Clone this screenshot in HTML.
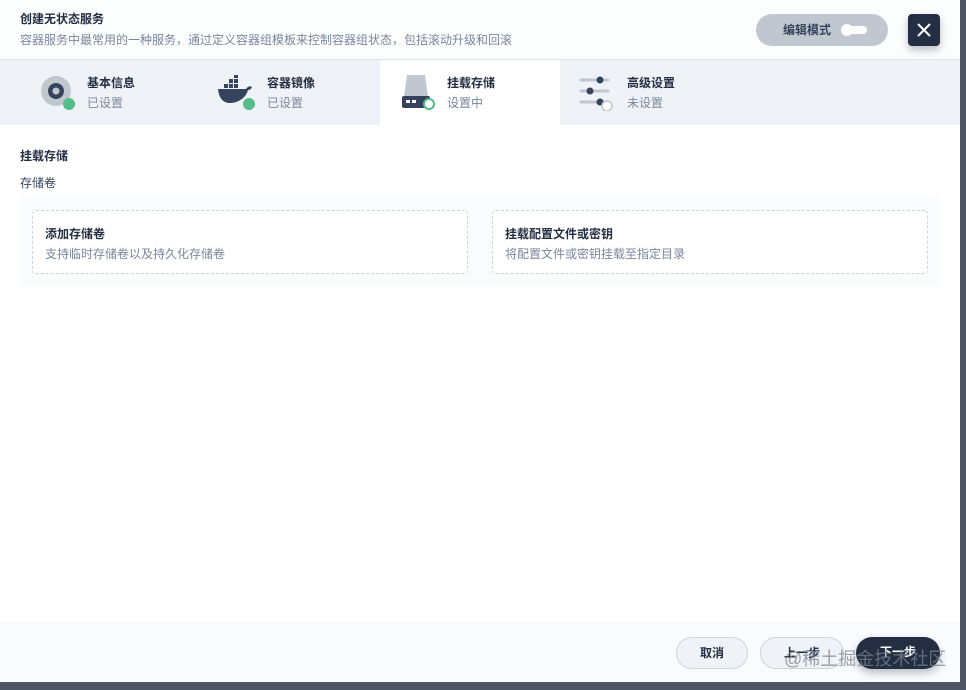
<!DOCTYPE html>
<html><head><meta charset="utf-8"><style>
*{margin:0;padding:0;box-sizing:border-box}
body{width:966px;height:690px;background:#4d5564;font-family:"Liberation Sans","Noto Sans CJK SC",sans-serif;position:relative;overflow:hidden}
.modal{position:absolute;left:0;top:0;width:960px;height:682px;background:#fff}
.hdr{height:60px;background:#fcfdfd;border-bottom:1px solid #dfe3e8;position:relative}
.t1{position:absolute;left:20px;top:10px;font-size:12px;font-weight:bold;color:#242e42}
.t2{position:absolute;left:20px;top:31px;font-size:12px;color:#79879c}
.edit{position:absolute;left:756px;top:14px;width:132px;height:32px;border-radius:16px;background:#c1c7cf;font-size:12px;color:#36435c;font-weight:bold}
.edit span{position:absolute;left:27px;top:7px}
.tog{position:absolute;left:87px;top:12px;width:24px;height:8px;border-radius:4px;background:#fff}
.tog:before{content:"";position:absolute;left:-2px;top:-2px;width:12px;height:12px;border-radius:6px;background:#fff}
.close{position:absolute;left:908px;top:14px;width:32px;height:32px;border-radius:4px;background:#242e42;box-shadow:0 4px 8px rgba(36,46,66,.3)}
.tabs{height:65px;background:#eff3f7;position:relative}
.tab{position:absolute;top:0;height:65px;width:180px}
.tab.act{background:#fff}
.tab .n{position:absolute;left:67px;top:14px;font-size:12px;font-weight:bold;color:#242e42}
.tab .s{position:absolute;left:67px;top:34px;font-size:12px;color:#79879c}
.tab svg{position:absolute;left:18px;top:15px}
.body{padding:20px}
.h{font-size:12px;font-weight:bold;color:#242e42;margin-top:2px}
.l{font-size:12px;color:#36435c;margin-top:10px}
.box{margin-top:5px;background:#f9fbfd;height:90px;position:relative}
.card{position:absolute;top:14px;width:436px;height:64px;border:1px dashed #ccd3db;border-radius:4px;background:#fff}
.card .a{position:absolute;left:12px;top:14px;font-size:12px;font-weight:bold;color:#242e42}
.card .b{position:absolute;left:12px;top:34px;font-size:12px;color:#79879c}
.foot{position:absolute;left:0;top:622px;width:960px;height:60px;background:#f9fbfd}
.btn{position:absolute;top:15px;height:32px;border-radius:16px;font-size:12px;font-weight:bold;text-align:center;line-height:30px}
.wm{position:absolute;left:784px;top:645px;font-size:18px;color:rgba(120,130,140,.75)}
</style></head><body>
<div class="modal">
<div class="hdr">
<div class="t1">创建无状态服务</div>
<div class="t2">容器服务中最常用的一种服务，通过定义容器组模板来控制容器组状态，包括滚动升级和回滚</div>
<div class="edit"><span>编辑模式</span><div class="tog"></div></div>
<div class="close"><svg width="32" height="32"><path d="M10 10L22 22M22 10L10 22" stroke="#fff" stroke-width="2"/></svg></div>
</div>
<div class="tabs">
<div class="tab" style="left:20px"><svg width="40" height="36"><circle cx="18" cy="16" r="15" fill="#c1c7cf"/><circle cx="18" cy="16" r="8" fill="#36435c"/><circle cx="18" cy="16" r="3.5" fill="#c1c7cf"/><circle cx="31" cy="29" r="6" fill="#55bc8a"/></svg><div class="n">基本信息</div><div class="s">已设置</div></div>
<div class="tab" style="left:200px"><svg width="40" height="36"><path d="M0 14h28c2-3 4-3 6-2-1 2-2 3-4 3-2 8-10 13-18 13-7 0-11-5-12-14z" fill="#36435c"/><rect x="6" y="9" width="4" height="4" fill="#36435c"/><rect x="11" y="9" width="4" height="4" fill="#36435c"/><rect x="16" y="9" width="4" height="4" fill="#36435c"/><rect x="11" y="4" width="4" height="4" fill="#36435c"/><rect x="16" y="4" width="4" height="4" fill="#36435c"/><rect x="16" y="-1" width="4" height="4" fill="#36435c"/><circle cx="31" cy="29" r="6" fill="#55bc8a"/></svg><div class="n">容器镜像</div><div class="s">已设置</div></div>
<div class="tab act" style="left:380px"><svg width="40" height="36"><path d="M9 0h18l3 22H6z" fill="#c1c7cf"/><rect x="4" y="21" width="28" height="12" rx="2" fill="#36435c"/><rect x="8" y="25" width="4" height="3" fill="#fff"/><rect x="14" y="25" width="4" height="3" fill="#fff"/><circle cx="31" cy="29" r="5" fill="#fff" stroke="#55bc8a" stroke-width="2"/></svg><div class="n">挂载存储</div><div class="s">设置中</div></div>
<div class="tab" style="left:560px"><svg width="40" height="36"><g stroke="#c1c7cf" stroke-width="3" stroke-linecap="round"><path d="M3 5h27M3 16h27M3 27h27"/></g><circle cx="22" cy="5" r="3.5" fill="#36435c"/><circle cx="12" cy="16" r="3.5" fill="#36435c"/><circle cx="22" cy="27" r="3.5" fill="#36435c"/><circle cx="29" cy="31" r="5" fill="#fff" stroke="#c1c7cf" stroke-width="1.5"/></svg><div class="n">高级设置</div><div class="s">未设置</div></div>
</div>
<div class="body">
<div class="h">挂载存储</div>
<div class="l">存储卷</div>
<div class="box">
<div class="card" style="left:12px"><div class="a">添加存储卷</div><div class="b">支持临时存储卷以及持久化存储卷</div></div>
<div class="card" style="left:472px"><div class="a">挂载配置文件或密钥</div><div class="b">将配置文件或密钥挂载至指定目录</div></div>
</div>
</div>
<div class="foot">
<div class="btn" style="left:676px;width:72px;border:1px solid #ccd3db;background:#eff3f7;color:#242e42">取消</div>
<div class="btn" style="left:760px;width:84px;border:1px solid #ccd3db;background:#eff3f7;color:#242e42">上一步</div>
<div class="btn" style="left:856px;width:84px;background:#242e42;color:#fff;box-shadow:0 4px 8px rgba(36,46,66,.3)">下一步</div>
</div>
</div>
<div class="wm">@稀土掘金技术社区</div>
</body></html>
